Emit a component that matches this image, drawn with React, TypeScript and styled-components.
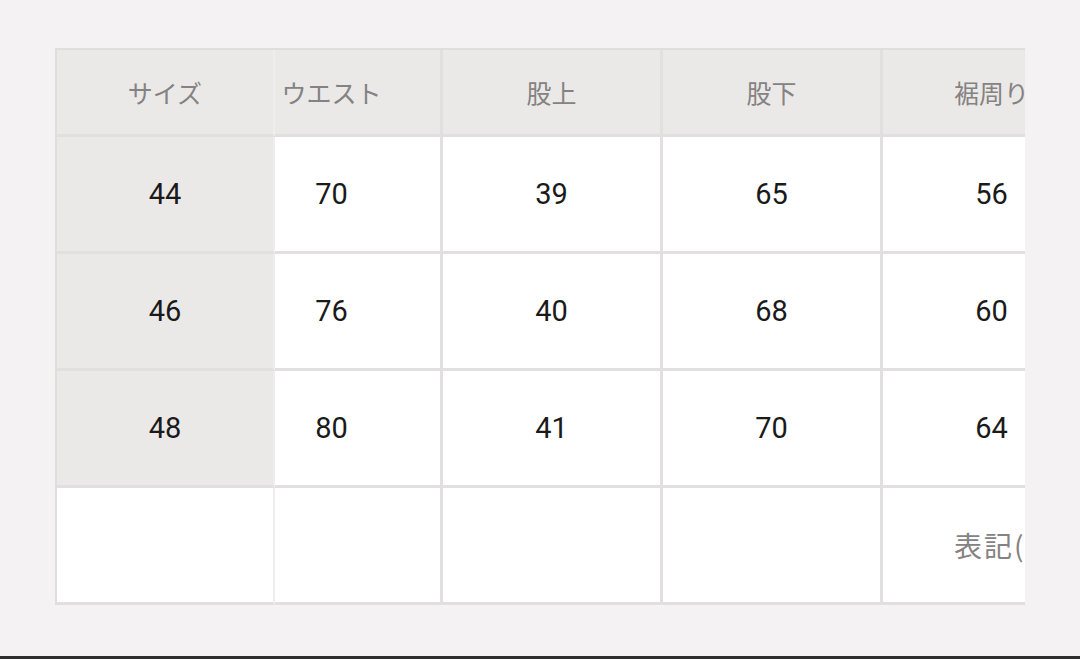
import { useLayoutEffect, useRef } from "react";
import styled, { createGlobalStyle } from "styled-components";

const GlobalStyle = createGlobalStyle`
  html, body {
    margin: 0;
    padding: 0;
    background: #f4f2f3;
  }
`;

const headers = ["サイズ", "ウエスト", "股上", "股下", "裾周り"];

const rows = [
  ["44", "70", "39", "65", "56"],
  ["46", "76", "40", "68", "60"],
  ["48", "80", "41", "70", "64"],
];

const App = () => {
  const scrollRef = useRef<HTMLDivElement>(null);

  // the chart is scrolled a little to the right, so the waist column
  // slides under the sticky size column
  useLayoutEffect(() => {
    if (scrollRef.current) scrollRef.current.scrollLeft = 52;
  }, []);

  return (
    <Page>
      <GlobalStyle />
      <ScrollArea ref={scrollRef}>
        <SizeTable>
          <thead>
            <tr>
              {headers.map((h, i) => (
                <HeadCell key={h} $sticky={i === 0}>
                  {h}
                </HeadCell>
              ))}
            </tr>
          </thead>
          <tbody>
            {rows.map((row) => (
              <tr key={row[0]}>
                {row.map((v, i) => (
                  <BodyCell key={i} $sticky={i === 0}>
                    {v}
                  </BodyCell>
                ))}
              </tr>
            ))}
            <tr>
              <BodyCell $sticky $blank />
              <BodyCell />
              <BodyCell />
              <BodyCell />
              <NoteCell>表記(cm)</NoteCell>
            </tr>
          </tbody>
        </SizeTable>
      </ScrollArea>
      <BottomBar />
    </Page>
  );
};

const Page = styled.div`
  min-height: 100vh;
  box-sizing: border-box;
  display: flex;
  flex-direction: column;
  padding: 48px 0 0 55px;
`;

const ScrollArea = styled.div`
  width: 970px;
  box-sizing: border-box;
  overflow: hidden;
  border-top: 2px solid #dfdddd;
  border-left: 2px solid #dfdddd;
`;

const SizeTable = styled.table`
  border-collapse: separate;
  border-spacing: 0;
  table-layout: fixed;
  width: 1098px;

  td,
  th {
    box-sizing: border-box;
    width: 220px;
    padding: 0;
    text-align: center;
    vertical-align: middle;
    border-right: 3px solid #e1dfdf;
    border-bottom: 3px solid #e1dfdf;
  }

  td:first-child,
  th:first-child {
    width: 218px;
  }
`;

const HeadCell = styled.th<{ $sticky?: boolean }>`
  height: 87px;
  background: #ebe9e8;
  color: #848282;
  font-family: "Noto Sans CJK JP", "Noto Sans", sans-serif;
  font-size: 25px;
  font-weight: 400;
  white-space: nowrap;
  ${({ $sticky }) =>
    $sticky &&
    `
    position: sticky;
    left: 0;
    z-index: 2;
    border-right: 2px solid #efeded !important;
  `}
`;

const BodyCell = styled.td<{ $sticky?: boolean; $blank?: boolean }>`
  height: 117px;
  background: #ffffff;
  color: #1a1a1a;
  font-family: Roboto, "Noto Sans", sans-serif;
  font-size: 29px;
  ${({ $sticky, $blank }) =>
    $sticky &&
    `
    position: sticky;
    left: 0;
    z-index: 2;
    background: ${$blank ? "#ffffff" : "#ebe9e8"};
    border-right: 2px solid #efeded !important;
  `}
`;

const NoteCell = styled.td`
  height: 117px;
  background: #ffffff;
  color: #848282;
  font-family: "Noto Sans CJK JP", "Noto Sans", sans-serif;
  font-size: 28px;
  letter-spacing: 2px;
  white-space: nowrap;
  text-align: left !important;
  padding-left: 71px !important;
`;

const BottomBar = styled.div`
  margin-top: auto;
  height: 3px;
  background: #2e2e2e;
  margin-left: -55px;
`;

export default App;
